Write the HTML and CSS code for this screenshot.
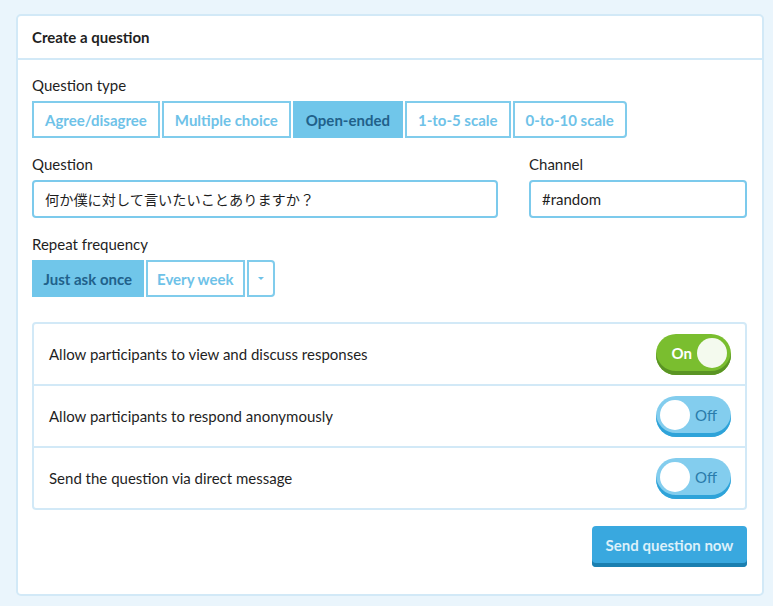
FILE: index.html
```html
<!DOCTYPE html>
<html>
<head>
<meta charset="utf-8">
<link rel="stylesheet" href="styles.css">
</head>
<body>
<div class="card">
  <div class="card-header">Create a question</div>
  <div class="card-body">
    <div class="field">
      <div class="label">Question type</div>
      <div class="btn-group">
        <button class="seg">Agree/disagree</button>
        <button class="seg">Multiple choice</button>
        <button class="seg active">Open-ended</button>
        <button class="seg">1-to-5 scale</button>
        <button class="seg">0-to-10 scale</button>
      </div>
    </div>
    <div class="row-fields">
      <div class="field">
        <div class="label">Question</div>
        <div class="input jp">何か僕に対して言いたいことありますか？</div>
      </div>
      <div class="field">
        <div class="label">Channel</div>
        <div class="input">#random</div>
      </div>
    </div>
    <div class="field">
      <div class="label">Repeat frequency</div>
      <div class="btn-group">
        <button class="seg narrow active">Just ask once</button>
        <button class="seg narrow">Every week</button>
        <button class="seg caret-btn"><span class="caret"></span></button>
      </div>
    </div>
    <div class="settings">
      <div class="setting">
        <span>Allow participants to view and discuss responses</span>
        <div class="toggle on"><span class="t-text">On</span><span class="knob"></span></div>
      </div>
      <div class="setting">
        <span>Allow participants to respond anonymously</span>
        <div class="toggle off"><span class="knob"></span><span class="t-text">Off</span></div>
      </div>
      <div class="setting">
        <span>Send the question via direct message</span>
        <div class="toggle off"><span class="knob"></span><span class="t-text">Off</span></div>
      </div>
    </div>
    <div class="actions">
      <button class="send">Send question now</button>
    </div>
  </div>
</div>
</body>
</html>
```

FILE: styles.css
```css
* { box-sizing: border-box; }
html, body { margin: 0; padding: 0; }
body {
  background: #eaf5fc;
  font-family: "Lato", "Noto Sans", sans-serif;
  color: #1f1f1f;
  padding: 14px 9px 11px 16px;
}
.card {
  background: #fff;
  border: 2px solid #d2e9f7;
  border-radius: 5px;
}
.card-header {
  height: 44px;
  display: flex;
  align-items: center;
  padding-left: 14px;
  font-size: 15px;
  font-weight: 700;
  border-bottom: 2px solid #d2e9f7;
}
.card-body {
  padding: 15px 15px 27px 14px;
  display: flex;
  flex-direction: column;
  gap: 16px;
}
.field { display: flex; flex-direction: column; }
.label {
  font-size: 15px;
  line-height: 20px;
  margin-bottom: 6px;
}
.btn-group { display: flex; gap: 2px; }
.seg {
  height: 37px;
  padding: 0 11px;
  border: 2px solid #80ccec;
  background: #fff;
  color: #6ec2e8;
  font-family: inherit;
  font-size: 15px;
  font-weight: 700;
  border-radius: 0;
}
.seg.narrow { padding: 0 9.5px; }
.seg:last-child { border-radius: 0 4px 4px 0; }
.seg.active { background: #70c6ea; border-color: #70c6ea; color: #21618a; }
.caret-btn { width: 28px; padding: 0; display: flex; align-items: center; justify-content: center; }
.caret {
  width: 0; height: 0;
  border-left: 3.5px solid transparent;
  border-right: 3.5px solid transparent;
  border-top: 3.5px solid #6ec2e8;
}
.row-fields {
  display: grid;
  grid-template-columns: 1fr 218px;
  gap: 31px;
}
.input {
  height: 38px;
  border: 2px solid #7ccaec;
  border-radius: 4px;
  display: flex;
  align-items: center;
  padding-left: 11px;
  font-size: 15px;
}
.input.jp { font-family: "Noto Sans CJK JP", sans-serif; font-size: 14.2px; }
.settings {
  margin-top: 9px;
  border: 2px solid #d2e9f7;
  border-radius: 4px;
}
.setting {
  height: 62px;
  display: flex;
  align-items: center;
  justify-content: space-between;
  padding: 0 14px 0 15px;
  font-size: 15px;
  border-top: 2px solid #d2e9f7;
}
.setting:first-child { border-top: none; height: 60px; }
.toggle {
  width: 75px;
  height: 41px;
  border-radius: 20px;
  display: flex;
  align-items: center;
  padding: 0 4px 3px 4px;
  gap: 5px;
  font-size: 15px;
  margin-top: 1px;
}
.toggle.on {
  background: #7abe2f;
  box-shadow: inset 0 -4px 0 #5a9424;
  justify-content: flex-end;
  color: #fff;
  font-weight: 700;
}
.toggle.off {
  background: #83cdee;
  box-shadow: inset 0 -4px 0 #2ea3d9;
  color: #2a7cab;
}
.knob {
  width: 30px; height: 30px;
  border-radius: 50%;
  background: #fff;
}
.toggle.on .knob { background: #f4faee; }
.actions { display: flex; justify-content: flex-end; }
.send {
  height: 41px;
  width: 155px;
  padding: 0 0 3px;
  border: none;
  border-radius: 4px;
  background: #39a8df;
  box-shadow: inset 0 -4px 0 #1b7fb0;
  color: #dcf0fa;
  font-family: inherit;
  font-size: 15px;
  font-weight: 700;
}
```
